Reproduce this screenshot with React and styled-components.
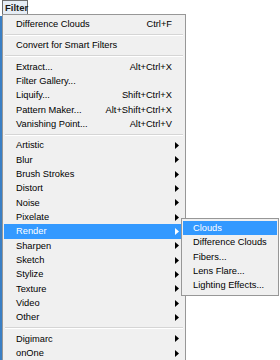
import React from 'react'
import styled, { createGlobalStyle } from 'styled-components'

const GlobalStyle = createGlobalStyle`
  html, body {
    margin: 0;
    padding: 0;
    background: #ffffff;
  }
  body {
    width: 280px;
    height: 360px;
    overflow: hidden;
    font-family: "Liberation Sans", Arial, sans-serif;
  }
`

const items = [
  { label: 'Difference Clouds', shortcut: 'Ctrl+F' },
  { sep: true },
  { label: 'Convert for Smart Filters' },
  { sep: true },
  { label: 'Extract...', shortcut: 'Alt+Ctrl+X' },
  { label: 'Filter Gallery...' },
  { label: 'Liquify...', shortcut: 'Shift+Ctrl+X' },
  { label: 'Pattern Maker...', shortcut: 'Alt+Shift+Ctrl+X' },
  { label: 'Vanishing Point...', shortcut: 'Alt+Ctrl+V' },
  { sep: true },
  { label: 'Artistic', sub: true },
  { label: 'Blur', sub: true },
  { label: 'Brush Strokes', sub: true },
  { label: 'Distort', sub: true },
  { label: 'Noise', sub: true },
  { label: 'Pixelate', sub: true },
  { label: 'Render', sub: true, active: true },
  { label: 'Sharpen', sub: true },
  { label: 'Sketch', sub: true },
  { label: 'Stylize', sub: true },
  { label: 'Texture', sub: true },
  { label: 'Video', sub: true },
  { label: 'Other', sub: true },
  { sep: true },
  { label: 'Digimarc', sub: true },
  { label: 'onOne', sub: true },
]

const renderItems = ['Clouds', 'Difference Clouds', 'Fibers...', 'Lens Flare...', 'Lighting Effects...']

function Arrow({ light }) {
  return (
    <svg width="4" height="7" viewBox="0 0 4 7">
      <path d="M0 0 L4 3.5 L0 7 Z" fill={light ? '#ffffff' : '#000000'} />
    </svg>
  )
}

function App() {
  return (
    <Page>
      <GlobalStyle />
      <MenuBar>
        <MenuTitle>Filter</MenuTitle>
      </MenuBar>
      <Stage>
        <Menu>
          {items.map((it, i) =>
            it.sep ? (
              <Separator key={i} />
            ) : (
              <Row key={i} active={it.active}>
                <Label>{it.label}</Label>
                <Shortcut>{it.shortcut}</Shortcut>
                <ArrowCell>{it.sub && <Arrow light={it.active} />}</ArrowCell>
              </Row>
            )
          )}
        </Menu>
        <SubMenu>
          {renderItems.map((label, i) => (
            <SubRow key={label} active={i === 0}>{label}</SubRow>
          ))}
        </SubMenu>
      </Stage>
    </Page>
  )
}

const Page = styled.div`
  width: 280px;
  height: 360px;
  position: relative;
  background: #ffffff;
`

const MenuBar = styled.div`
  display: flex;
  height: 14px;
  padding-left: 2px;
`

const MenuTitle = styled.div`
  box-sizing: border-box;
  width: 26px;
  height: 15px;
  border: 1px solid #6e6e6e;
  border-bottom: none;
  background: #e6edf5;
  font-size: 9.5px;
  font-weight: bold;
  color: #1a1a1a;
  line-height: 13px;
  padding-left: 2px;
`

const Stage = styled.div`
  position: relative;
  padding-left: 2px;
`

const Menu = styled.div`
  box-sizing: border-box;
  width: 184px;
  border: 1px solid #979797;
  background: #f0f0f0;
  padding: 2px 1px 1px 1px;
  box-shadow: -2px 2px 0 #3a7fc4;
`

const Row = styled.div`
  display: grid;
  grid-template-columns: 1fr auto 12px;
  align-items: center;
  height: 14.33px;
  padding-left: 12px;
  font-size: 9.3px;
  color: ${({ active }) => (active ? '#ffffff' : '#000000')};
  background: ${({ active }) => (active ? '#3399ff' : 'transparent')};
`

const Label = styled.span`
  white-space: nowrap;
`

const Shortcut = styled.span`
  white-space: nowrap;
`

const ArrowCell = styled.span`
  display: flex;
  align-items: center;
  justify-content: flex-end;
  padding-right: 5px;
`

const Separator = styled.div`
  height: 1px;
  margin: 2.5px 1px 2.5px 1px;
  background: #d5d5d5;
  border-bottom: 1px solid #ffffff;
`

const SubMenu = styled.div`
  position: absolute;
  left: 181px;
  top: 204px;
  box-sizing: border-box;
  width: 98px;
  border: 1px solid #979797;
  background: #f0f0f0;
  padding: 2px 1px 2px 1px;
`

const SubRow = styled.div`
  height: 14.33px;
  line-height: 14.33px;
  padding-left: 10px;
  font-size: 9.3px;
  white-space: nowrap;
  color: ${({ active }) => (active ? '#ffffff' : '#000000')};
  background: ${({ active }) => (active ? '#3399ff' : 'transparent')};
`

export default App
